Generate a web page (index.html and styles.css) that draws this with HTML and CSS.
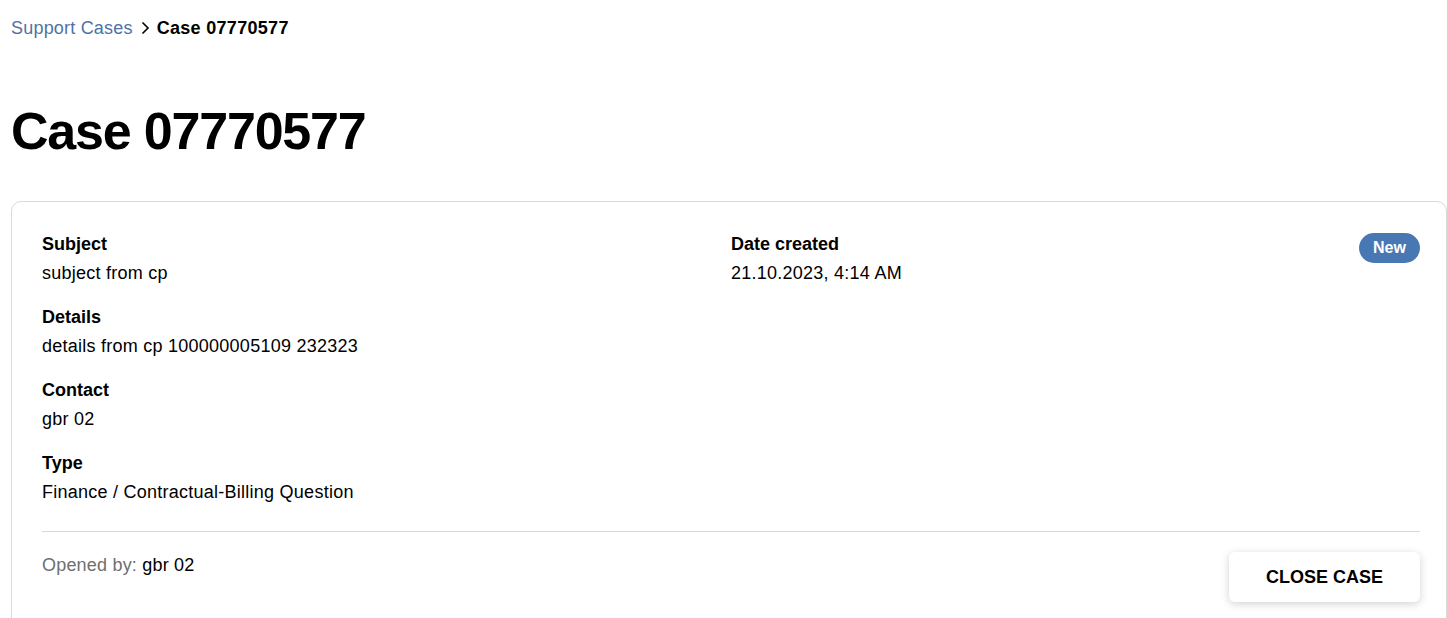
FILE: index.html
```html
<!DOCTYPE html>
<html lang="en">
<head>
<meta charset="utf-8">
<title>Case 07770577</title>
<link rel="stylesheet" href="styles.css">
</head>
<body>
<div class="page">
  <nav class="breadcrumb">
    <a class="crumb-link" href="#">Support Cases</a>
    <svg class="crumb-sep" width="10" height="14" viewBox="0 0 10 14"><path d="M2.5 1.5 L8 7 L2.5 12.5" fill="none" stroke="#000" stroke-width="1.6"/></svg>
    <span class="crumb-current">Case 07770577</span>
  </nav>
  <h1 class="title">Case 07770577</h1>
  <section class="card">
    <div class="card-grid">
      <div class="col">
        <div class="field">
          <div class="label">Subject</div>
          <div class="value">subject from cp</div>
        </div>
        <div class="field">
          <div class="label">Details</div>
          <div class="value">details from cp 100000005109 232323</div>
        </div>
        <div class="field">
          <div class="label">Contact</div>
          <div class="value">gbr 02</div>
        </div>
        <div class="field">
          <div class="label">Type</div>
          <div class="value">Finance / Contractual-Billing Question</div>
        </div>
      </div>
      <div class="col col-right">
        <div class="field">
          <div class="label">Date created</div>
          <div class="value">21.10.2023, 4:14 AM</div>
        </div>
        <span class="badge">New</span>
      </div>
    </div>
    <hr class="divider">
    <div class="card-footer">
      <div class="opened"><span class="muted">Opened by:</span> gbr 02</div>
      <button class="btn">CLOSE CASE</button>
    </div>
  </section>
</div>
</body>
</html>
```
FILE: styles.css
```css
html, body {
  margin: 0;
  padding: 0;
  background: #fff;
}
body {
  font-family: "Liberation Sans", Arial, Helvetica, sans-serif;
  color: #000;
  overflow: hidden;
}
.page {
  padding: 16px 0 0 11px;
}
.breadcrumb {
  display: flex;
  align-items: center;
  gap: 7px;
  font-size: 18px;
  line-height: 24px;
}
.crumb-link {
  color: #4f72a6;
  text-decoration: none;
  letter-spacing: 0.2px;
}
.crumb-sep {
  display: block;
}
.crumb-current {
  font-weight: 700;
  letter-spacing: 0.3px;
}
.title {
  margin: 61px 0 40px;
  font-size: 52px;
  line-height: 60px;
  font-weight: 700;
  letter-spacing: -1.2px;
}
.card {
  border: 1px solid #d9d9d9;
  border-radius: 10px;
  padding: 30px 26px 40px 30px;
  min-height: 380px;
}
.card-grid {
  display: grid;
  grid-template-columns: 1fr 1fr;
}
.col {
  display: flex;
  flex-direction: column;
  gap: 20px;
}
.col-right {
  flex-direction: row;
  justify-content: space-between;
  align-items: flex-start;
}
.field {
  display: flex;
  flex-direction: column;
  gap: 5px;
}
.label {
  font-size: 18px;
  line-height: 24px;
  font-weight: 700;
  letter-spacing: 0;
}
.value {
  font-size: 18px;
  line-height: 24px;
  letter-spacing: 0.25px;
}
.badge {
  margin-top: 1px;
  display: inline-flex;
  align-items: center;
  justify-content: center;
  width: 61px;
  height: 30px;
  border-radius: 15px;
  background: #4878b4;
  color: #fff;
  font-size: 16px;
  font-weight: 700;
}
.divider {
  margin: 27px 0 0;
  border: 0;
  border-top: 1px solid #d8d8d8;
}
.card-footer {
  display: flex;
  justify-content: space-between;
  align-items: flex-start;
  margin-top: 20px;
}
.opened {
  font-size: 18px;
  line-height: 24px;
  margin-top: 1px;
  letter-spacing: 0.2px;
}
.muted {
  color: #6f6f6f;
}
.btn {
  width: 191px;
  height: 50px;
  border: 0;
  border-radius: 6px;
  background: #fff;
  box-shadow: 0 2px 8px rgba(0, 0, 0, 0.18);
  font-family: inherit;
  font-size: 18px;
  font-weight: 700;
  color: #000;
  cursor: pointer;
}
```
